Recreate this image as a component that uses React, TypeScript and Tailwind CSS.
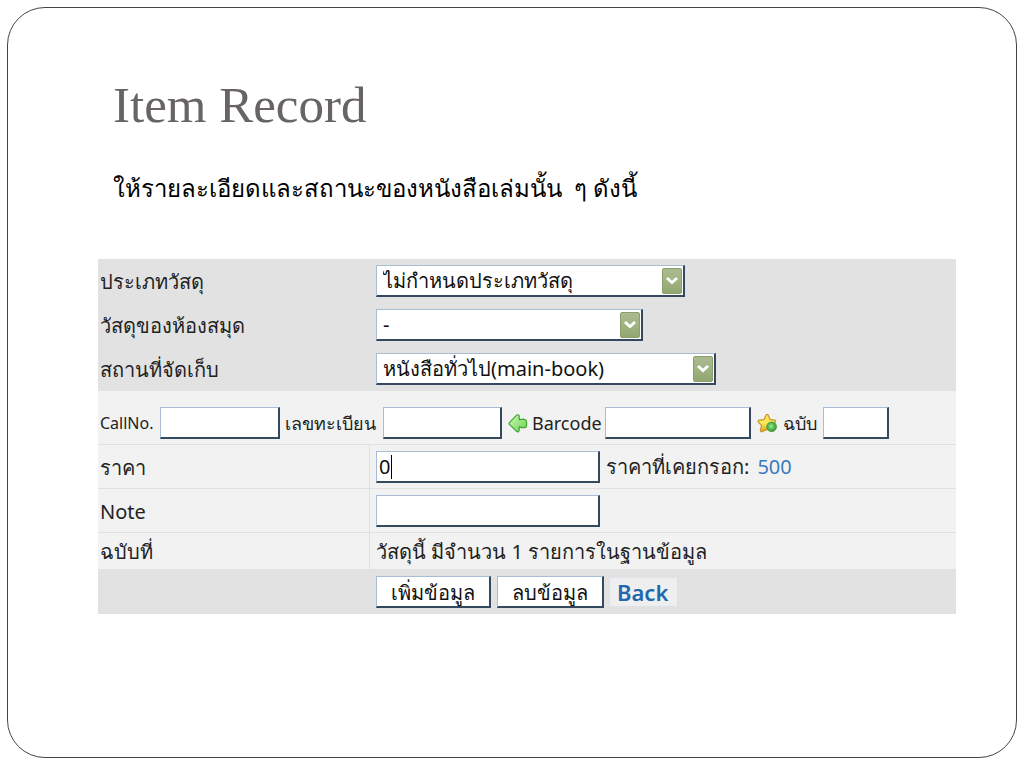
import type { ReactNode } from 'react';

const field =
  'h-8 border border-t-[#a9bdd2] border-l-[#a9bdd2] border-r-2 border-b-2 border-r-[#34495e] border-b-[#34495e] bg-white text-[#111111] outline-none';

function Row({ label, htmlFor, className, children }: { label?: string; htmlFor?: string; className: string; children: ReactNode }) {
  return (
    <div className={`grid grid-cols-[272px_1fr] ${className}`}>
      <div className="flex items-center pt-0.5 pl-0.5">
        {label && (
          <label htmlFor={htmlFor} className="whitespace-nowrap">
            {label}
          </label>
        )}
      </div>
      <div className="flex items-center pl-1.5">{children}</div>
    </div>
  );
}

function Picker({ id, width, value }: { id: string; width: string; value: string }) {
  return (
    <div className={`relative ${width}`}>
      <select id={id} className={`${field} w-full appearance-none pl-1.5`}>
        <option>{value}</option>
      </select>
      <svg
        className="pointer-events-none absolute top-[3px] right-[3px]"
        width="20"
        height="26"
        viewBox="0 0 20 26"
        aria-hidden="true"
      >
        <defs>
          <linearGradient id={`${id}-fill`} x1="0" y1="0" x2="0" y2="1">
            <stop offset="0" stopColor="#abbb92" />
            <stop offset="0.5" stopColor="#a0b482" />
            <stop offset="1" stopColor="#90a671" />
          </linearGradient>
        </defs>
        <rect x="0.5" y="0.5" width="19" height="25" rx="1.5" fill={`url(#${id}-fill)`} stroke="#8c9e6c" />
        <path d="M5 10 L10 14.6 L15 10" fill="none" stroke="#fff" strokeWidth="2.8" />
      </svg>
    </div>
  );
}

function ArrowIcon() {
  return (
    <svg width="20" height="20" viewBox="0 0 20 20" aria-hidden="true">
      <defs>
        <linearGradient id="arrow-fill" x1="0" y1="0" x2="1" y2="1">
          <stop offset="0" stopColor="#d2f8bd" />
          <stop offset="1" stopColor="#68d24a" />
        </linearGradient>
      </defs>
      <path
        d="M1.4 9.6 L8.6 2.2 Q10.8 1 11.2 3.2 V6.6 H12.6 Q14 5.6 16.6 6.4 Q18.8 7 18.6 9.6 V12 Q18.6 15 16.2 14.6 H14 L11.2 13.8 V17 Q11 19.6 8.6 18.4 L1.4 11.4 Q0.6 10.5 1.4 9.6 Z"
        fill="url(#arrow-fill)"
        stroke="#3da52f"
        strokeWidth="1.2"
        strokeLinejoin="round"
      />
    </svg>
  );
}

function StarIcon() {
  return (
    <svg width="20" height="20" viewBox="0 0 20 20" aria-hidden="true">
      <defs>
        <linearGradient id="star-fill" x1="0" y1="0" x2="0" y2="1">
          <stop offset="0" stopColor="#f8e04a" />
          <stop offset="0.5" stopColor="#fbe95c" />
          <stop offset="1" stopColor="#dba016" />
        </linearGradient>
        <radialGradient id="dot-fill" cx="0.45" cy="0.45" r="0.6">
          <stop offset="0" stopColor="#a6e8a0" />
          <stop offset="0.5" stopColor="#55b94e" />
          <stop offset="1" stopColor="#2f9a35" />
        </radialGradient>
      </defs>
      <path
        d="M10 1.4 Q11 1.2 11.6 3 L13 6.4 L18 7.2 Q19.4 7.8 18.2 9 L15 12 L15.6 18.2 L10 16.4 L5 18.8 Q3.2 19 3.4 17 L4.6 12.6 L1.4 9 Q0.6 7.4 2.4 7.2 L7 6.6 L8.6 3 Q9.2 1.4 10 1.4 Z"
        fill="url(#star-fill)"
        stroke="#c9962f"
        strokeWidth="1.2"
        strokeLinejoin="round"
      />
      <circle cx="14.6" cy="13.8" r="4.9" fill="url(#dot-fill)" stroke="#4c9c3f" strokeWidth="0.8" />
    </svg>
  );
}

export default function App() {
  return (
    <div className="flex min-h-screen bg-white px-[7px] pt-[7px] pb-2.5">
      <main className="flex-1 rounded-[38px] border border-[#444444] pr-[60px] pl-[90px]">
        <h1 className="mt-[65px] pl-[15px] font-['Liberation_Serif',serif] text-[51px] leading-16 text-[#696464]">
          Item Record
        </h1>
        <p className="mt-8 pl-[15px] font-['Liberation_Serif',serif] text-2xl leading-10 whitespace-pre text-black">
          ให้รายละเอียดและสถานะของหนังสือเล่มนั้น  ๆ ดังนี้
        </p>
        <form
          className="mt-[50px] font-['Noto_Sans',sans-serif] text-xl leading-7 text-[#222222]"
          onSubmit={(e) => e.preventDefault()}
        >
          <div className="bg-[#e2e2e2]">
            <Row label="ประเภทวัสดุ" htmlFor="kind" className="h-11">
              <Picker id="kind" width="w-[309px]" value="ไม่กำหนดประเภทวัสดุ" />
            </Row>
            <Row label="วัสดุของห้องสมุด" htmlFor="owner" className="h-11">
              <Picker id="owner" width="w-[267px]" value="-" />
            </Row>
            <Row label="สถานที่จัดเก็บ" htmlFor="place" className="h-11">
              <Picker id="place" width="w-[340px]" value="หนังสือทั่วไป(main-book)" />
            </Row>
          </div>
          <div className="bg-[#f2f2f2]">
            <div className="flex h-[54px] items-center border-b border-[#e0e0e0] pt-2.5 pl-0.5 text-lg whitespace-nowrap">
              <label htmlFor="call" className="w-[60px] text-base">CallNo.</label>
              <input id="call" className={`${field} w-[120px]`} />
              <label htmlFor="reg" className="w-[103px] pl-[5px]">เลขทะเบียน</label>
              <input id="reg" className={`${field} w-[119px]`} />
              <button type="button" aria-label="คัดลอก" className="ml-1.5">
                <ArrowIcon />
              </button>
              <label htmlFor="barcode" className="w-[77px] pl-1">Barcode</label>
              <input id="barcode" className={`${field} w-[146px]`} />
              <button type="button" aria-label="สร้าง" className="ml-1.5">
                <StarIcon />
              </button>
              <label htmlFor="copy" className="w-[46px] pl-1.5">ฉบับ</label>
              <input id="copy" className={`${field} w-[66px]`} />
            </div>
            <Row label="ราคา" htmlFor="price" className="h-11 border-b border-[#e0e0e0] divide-x divide-[#e0e0e0]">
              <div className="relative">
                <input id="price" defaultValue="0" className={`${field} w-[224px] pl-0.5`} />
                <span className="absolute top-1 left-[15px] h-6 w-px bg-black" />
              </div>
              <span className="pl-1.5">ราคาที่เคยกรอก:</span>
              <span className="pl-2 text-[#3a7bbf]">500</span>
            </Row>
            <Row label="Note" htmlFor="note" className="h-11 border-b border-[#e0e0e0] divide-x divide-[#e0e0e0]">
              <input id="note" className={`${field} w-[224px]`} />
            </Row>
            <Row label="ฉบับที่" className="h-9 divide-x divide-[#e0e0e0]">
              <span className="pt-0.5">วัสดุนี้ มีจำนวน 1 รายการในฐานข้อมูล</span>
            </Row>
          </div>
          <Row className="h-[45px] bg-[#e2e2e2]">
            <div className="flex items-center gap-1.5 whitespace-nowrap">
              <button type="submit" className={`${field} w-[115px] pt-1 leading-6`}>เพิ่มข้อมูล</button>
              <button type="button" className={`${field} w-[107px] pt-1 leading-6`}>ลบข้อมูล</button>
              <a href="#" className="flex h-7 w-[67px] items-center border border-[#e8eef4] bg-[#efefef] pl-1.5 text-[22px] font-semibold text-[#1f68ae]">
                Back
              </a>
            </div>
          </Row>
        </form>
      </main>
    </div>
  );
}
